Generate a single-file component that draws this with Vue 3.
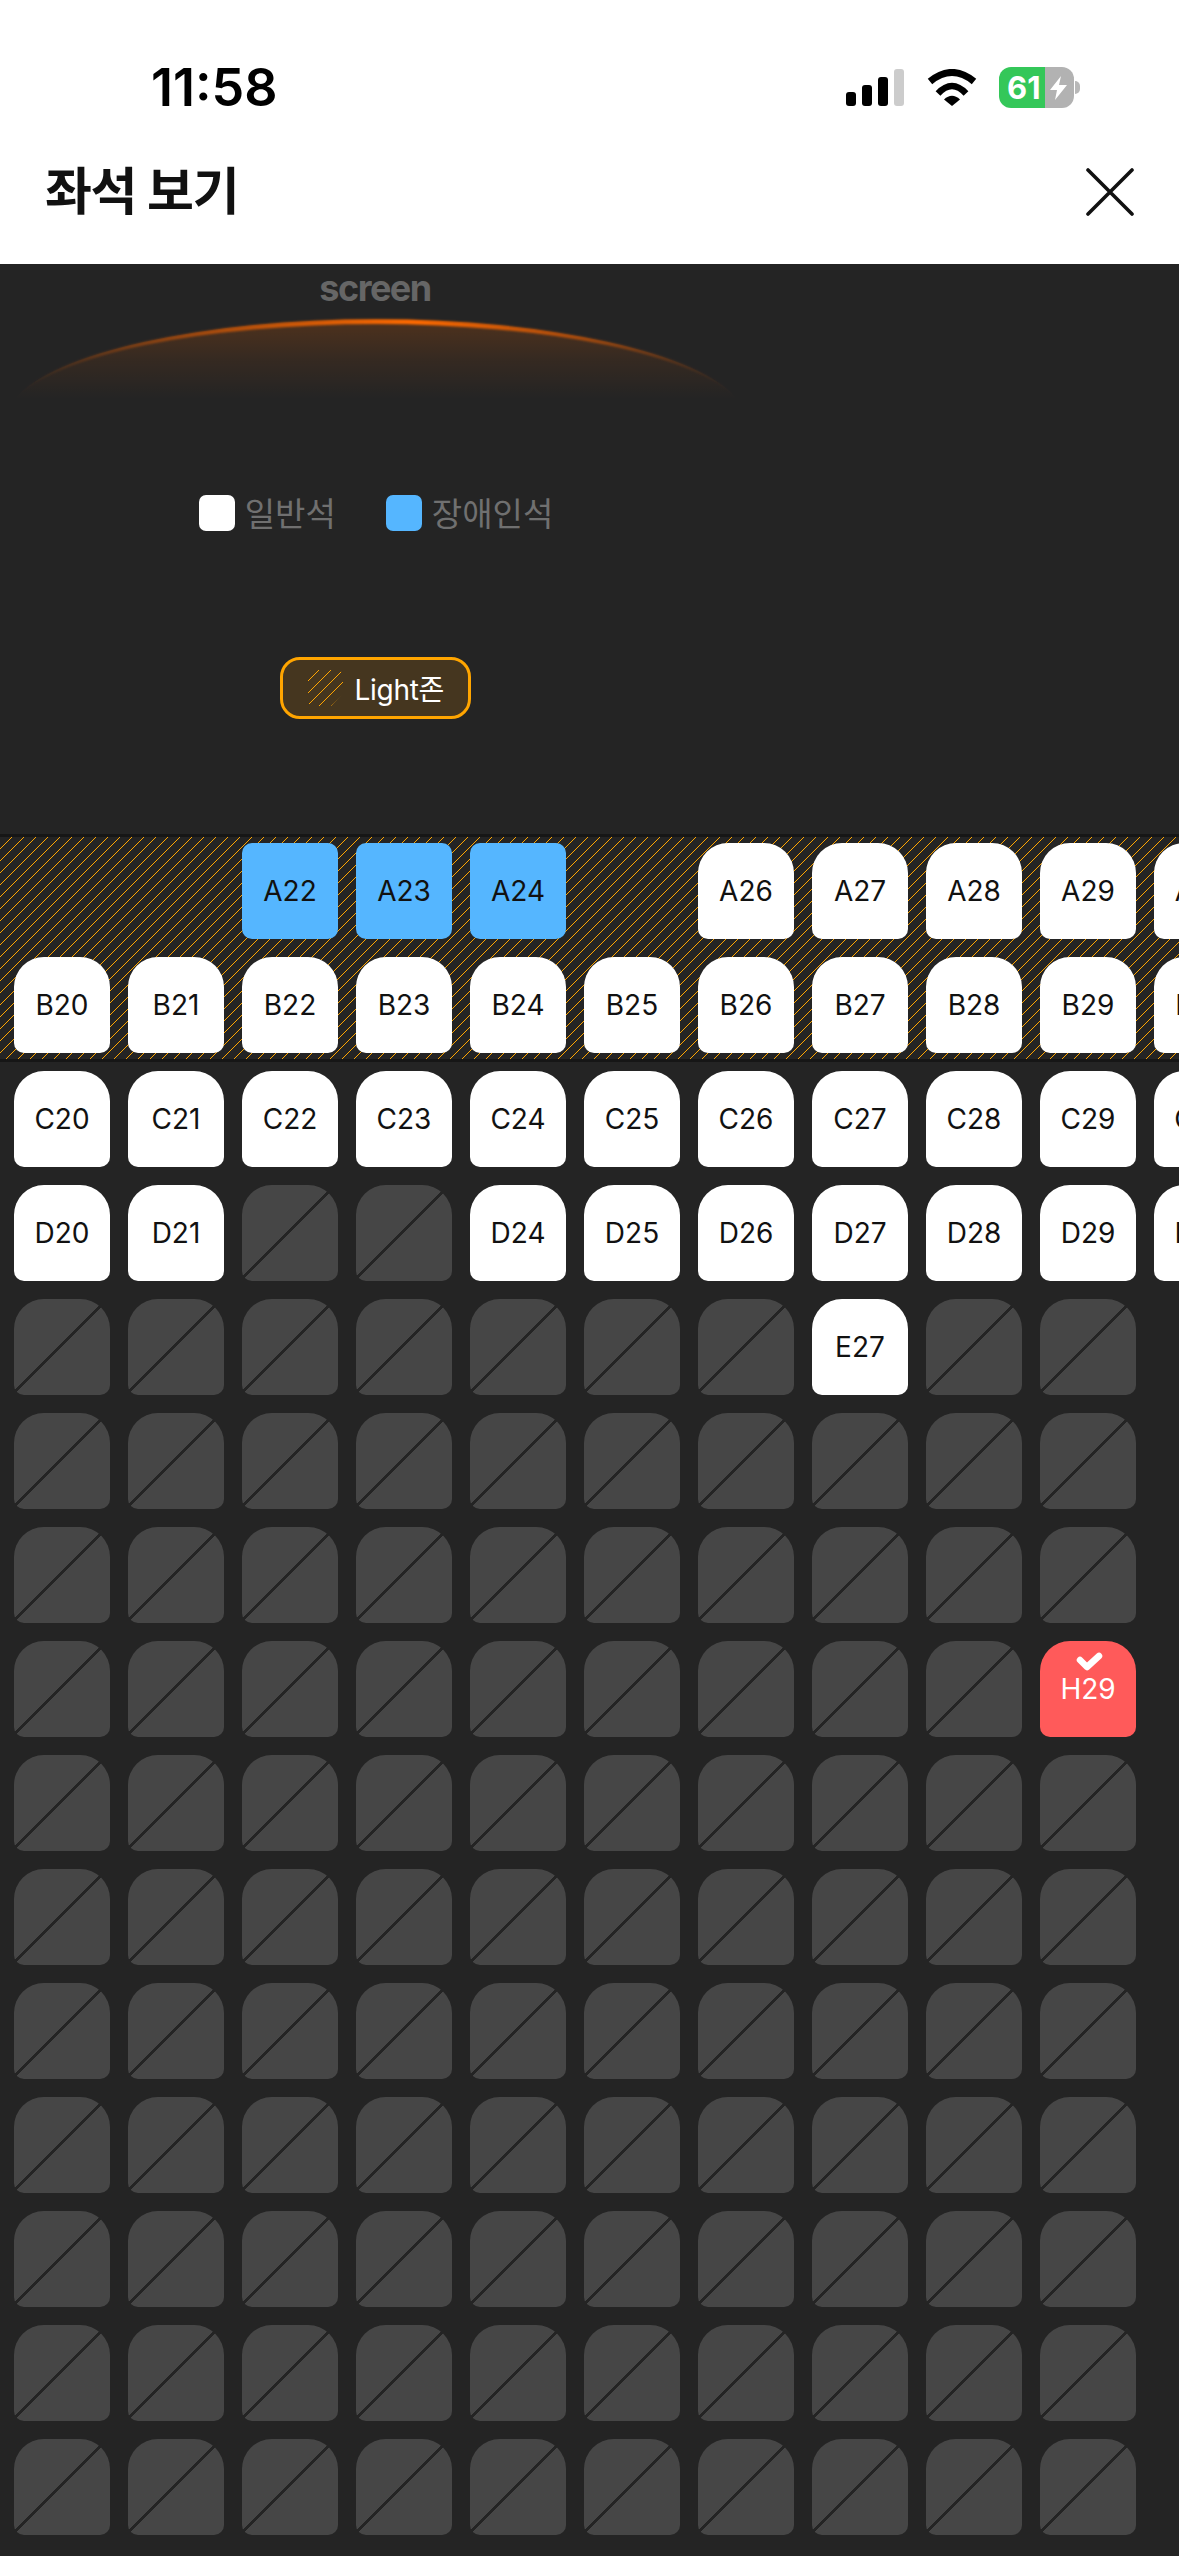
<template>
  <div class="page">
    <!-- status bar -->
    <div class="status">
      <span class="time">11:58</span>
      <div class="status-icons">
        <div class="signal">
          <i class="b1"></i><i class="b2"></i><i class="b3"></i><i class="b4"></i>
        </div>
        <svg class="wifi" width="50" height="37" viewBox="0 0 50 37">
          <path d="M3 12.5 Q25 -5.5 47 12.5" fill="none" stroke="#000" stroke-width="7" />
          <path d="M11 24.5 Q25 9.5 39 24.5" fill="none" stroke="#000" stroke-width="6.5" />
          <path d="M25 37 L17 30.5 Q25 23 33 30.5 Z" fill="#000" />
        </svg>
        <div class="battery">
          <span class="level">61</span>
          <svg width="17" height="24" viewBox="0 0 17 24">
            <path d="M11 0 L0 14 H7 L5 24 L17 9 H9 Z" fill="#fff" />
          </svg>
        </div>
      </div>
    </div>

    <!-- header -->
    <div class="header">
      <h1>좌석 보기</h1>
      <svg width="48" height="48" viewBox="0 0 48 48">
        <path d="M2 2 L46 46 M46 2 L2 46" stroke="#111" stroke-width="3.6" stroke-linecap="round" />
      </svg>
    </div>

    <div class="hall">
      <div class="stage">
        <div class="screen-label">screen</div>
        <svg class="glow" width="752" height="95" viewBox="0 0 752 95">
          <defs>
            <linearGradient id="arcLine" x1="0" y1="0" x2="1" y2="0">
              <stop offset="0" stop-color="#ff6a00" stop-opacity="0" />
              <stop offset="0.06" stop-color="#f06000" stop-opacity="0.15" />
              <stop offset="0.25" stop-color="#f06000" stop-opacity="0.55" />
              <stop offset="0.55" stop-color="#ff6a00" stop-opacity="1" />
              <stop offset="0.78" stop-color="#f06000" stop-opacity="0.6" />
              <stop offset="0.94" stop-color="#f06000" stop-opacity="0.15" />
              <stop offset="1" stop-color="#ff6a00" stop-opacity="0" />
            </linearGradient>
            <linearGradient id="arcFill" x1="0" y1="0" x2="0" y2="1">
              <stop offset="0" stop-color="#ff6a00" stop-opacity="0.2" />
              <stop offset="0.5" stop-color="#ff6a00" stop-opacity="0.08" />
              <stop offset="1" stop-color="#ff6a00" stop-opacity="0" />
            </linearGradient>
            <filter id="soft" x="-5%" y="-20%" width="110%" height="140%">
              <feGaussianBlur stdDeviation="0.8" />
            </filter>
          </defs>
          <path d="M15 83 A370 102 0 0 1 737 83 Z" fill="url(#arcFill)" />
          <path d="M15 83 A370 102 0 0 1 737 83 A370 96 0 0 0 15 83 Z" fill="url(#arcLine)" filter="url(#soft)" />
        </svg>

        <div class="legend">
          <div class="legend-item"><span class="swatch white"></span><span class="legend-text">일반석</span></div>
          <div class="legend-item"><span class="swatch blue"></span><span class="legend-text">장애인석</span></div>
        </div>

        <div class="light-badge">
          <svg width="36" height="36" viewBox="0 0 36 36">
            <defs>
              <pattern id="badgeHatch" width="12" height="12" patternUnits="userSpaceOnUse">
                <path :d="STAIR" fill="#ffa500" />
              </pattern>
            </defs>
            <polygon points="1 10 11 0 23 0 34 1 36 11 36 23 24 36 12 36 2 34 1 22" fill="url(#badgeHatch)" />
          </svg>
          <span>Light존</span>
        </div>
      </div>

      <!-- seats -->
      <div class="seat-map">
        <div class="zone">
          <div v-for="row in zoneRows" :key="row.name" class="row">
            <div v-for="seat in row.seats" :key="seat.id" class="seat" :class="seat.type">
              {{ seat.label }}
            </div>
          </div>
        </div>
        <div class="rest">
          <div v-for="row in restRows" :key="row.name" class="row">
            <div v-for="seat in row.seats" :key="seat.id" class="seat" :class="seat.type">
              <svg v-if="seat.type === 'picked'" class="check" width="27" height="19" viewBox="0 0 27 19">
                <path d="M4 8 L11 15 L23 4" fill="none" stroke="#fff" stroke-width="6.5" stroke-linecap="round" stroke-linejoin="round" />
              </svg>
              {{ seat.label }}
            </div>
          </div>
        </div>
      </div>
    </div>
  </div>
</template>

<script setup>
const COLS = Array.from({ length: 11 }, (_, i) => 20 + i)

// one pixel per row, so the hatch stays as sharp as in the design
const STAIR = Array.from({ length: 12 }, (_, y) => `M${11 - y} ${y}h1v1h-1z`).join('')

const seatType = (name, num) => {
  const id = name + num
  if (name === 'A' && (num === 20 || num === 21 || num === 25)) return 'empty'
  if (name === 'A' && num >= 22 && num <= 24) return 'blue'
  if (name === 'A' || name === 'B' || name === 'C') return 'open'
  if (name === 'D') return num === 22 || num === 23 ? 'taken' : 'open'
  if (id === 'E27') return 'open'
  if (id === 'H29') return 'picked'
  return 'taken'
}

const makeRow = (name) => {
  const nums = 'ABCD'.includes(name) ? COLS : COLS.slice(0, 10)
  return {
    name,
    seats: nums.map((num) => {
      const type = seatType(name, num)
      return {
        id: name + num,
        type,
        label: type === 'taken' || type === 'empty' ? '' : name + num,
      }
    }),
  }
}

const zoneRows = ['A', 'B'].map(makeRow)
const restRows = 'CDEFGHIJKLMNO'.split('').map(makeRow)
</script>

<style>
html, body {
  margin: 0;
  background: #fff;
}
</style>

<style scoped>
.page {
  width: 1179px;
  height: 2556px;
  overflow: hidden;
  display: flex;
  flex-direction: column;
  font-family: Inter, "Noto Sans CJK KR", sans-serif;
}

/* status bar */
.status {
  height: 138px;
  padding: 67px 105px 0 151px;
  box-sizing: border-box;
  display: flex;
  justify-content: space-between;
  align-items: flex-start;
  background: #fff;
}
.time {
  font-size: 52px;
  font-weight: 600;
  line-height: 41px;
  color: #000;
}
.status-icons {
  display: flex;
  align-items: flex-start;
}
.signal {
  display: flex;
  align-items: flex-end;
  gap: 6px;
  height: 39px;
  margin-right: 23px;
}
.signal i {
  width: 10px;
  border-radius: 3px;
  background: #000;
}
.signal .b1 { height: 14px; }
.signal .b2 { height: 21px; }
.signal .b3 { height: 29px; }
.signal .b4 { height: 37px; background: #ccc; }
.wifi {
  margin-top: 2px;
  margin-right: 22px;
}
.battery {
  position: relative;
  width: 75px;
  height: 41px;
  border-radius: 12px;
  background: linear-gradient(90deg, #34c759 62%, #b2b2b2 62%);
  display: flex;
  align-items: center;
}
.battery::after {
  content: "";
  position: absolute;
  left: 76px;
  top: 14px;
  width: 5px;
  height: 13px;
  border-radius: 0 6px 6px 0;
  background: #b8b8b8;
}
.level {
  width: 46px;
  padding-left: 8px;
  box-sizing: border-box;
  font-size: 31px;
  font-weight: 700;
  line-height: 41px;
  color: #fff;
  white-space: nowrap;
}
.battery svg {
  margin-left: 5px;
}

/* header */
.header {
  height: 126px;
  padding: 0 45px 18px;
  box-sizing: border-box;
  display: flex;
  justify-content: space-between;
  align-items: center;
  background: #fff;
}
.header h1 {
  margin: 0;
  font-size: 51px;
  font-weight: 700;
  line-height: 60px;
  letter-spacing: -1.3px;
  color: #111;
}

/* dark hall */
.hall {
  flex: 1;
  background: #242424;
}
.stage {
  width: 752px;
  display: flex;
  flex-direction: column;
  align-items: center;
}
.screen-label {
  margin-top: 4px;
  margin-left: -2px;
  font-size: 36px;
  font-weight: 700;
  line-height: 40px;
  letter-spacing: -1.5px;
  color: #666;
}
.glow {
  display: block;
  margin-top: 8px;
}
.legend {
  margin-top: 83px;
  display: flex;
  gap: 50px;
}
.legend-item {
  display: flex;
  align-items: center;
  gap: 10px;
  height: 37px;
  font-size: 33px;
  color: #707070;
}
.legend-text {
  margin-bottom: 2px;
}
.swatch {
  width: 36px;
  height: 36px;
  border-radius: 7px;
}
.swatch.white { background: #fff; }
.swatch.blue { background: #55b6ff; }

.light-badge {
  margin-top: 126px;
  margin-left: -2px;
  width: 191px;
  height: 62px;
  box-sizing: border-box;
  padding-left: 24px;
  border: 3.5px solid #ffa500;
  border-radius: 20px;
  background: #45361f;
  display: flex;
  align-items: center;
  gap: 12px;
  font-size: 28px;
  letter-spacing: -0.3px;
  color: #fff;
}

/* seats */
.seat-map {
  margin-top: 115px;
}
.zone {
  padding: 6px 0;
  border-top: 3px solid #161616;
  border-bottom: 3px solid #161616;
  background: #242424 url("data:image/svg+xml,%3Csvg xmlns='http://www.w3.org/2000/svg' width='12' height='12'%3E%3Cpath fill='%23ffa500' d='M11 0h1v1h-1zM10 1h1v1h-1zM9 2h1v1h-1zM8 3h1v1h-1zM7 4h1v1h-1zM6 5h1v1h-1zM5 6h1v1h-1zM4 7h1v1h-1zM3 8h1v1h-1zM2 9h1v1h-1zM1 10h1v1h-1zM0 11h1v1h-1z'/%3E%3C/svg%3E");
  display: flex;
  flex-direction: column;
  gap: 18px;
}
.rest {
  margin-top: 9px;
  display: flex;
  flex-direction: column;
  gap: 18px;
}
.row {
  display: flex;
  gap: 18px;
  padding-left: 14px;
}
.seat {
  position: relative;
  flex: none;
  width: 96px;
  height: 96px;
  display: flex;
  align-items: center;
  justify-content: center;
  border-radius: 30px 30px 10px 10px;
  font-size: 28px;
  color: #111;
}
.seat.open {
  background: #fff;
}
.seat.blue {
  background: #55b6ff;
  border-radius: 10px;
}
.seat.empty {
  background: none;
}
.seat.taken {
  background: linear-gradient(
    135deg,
    #464646 calc(50% - 3.3px),
    #242424 calc(50% - 3.3px),
    #242424 calc(50% - 0.3px),
    #464646 calc(50% - 0.3px)
  );
}
.seat.picked {
  background: #ff5a5a;
  color: #fff;
}
.check {
  position: absolute;
  left: 36px;
  top: 11px;
}
</style>
